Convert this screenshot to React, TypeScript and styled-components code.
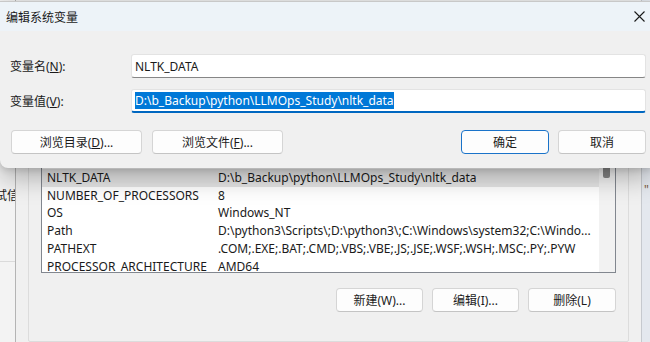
import React from 'react';
import styled, { createGlobalStyle } from 'styled-components';

const GlobalStyle = createGlobalStyle`
  html, body {
    margin: 0;
    padding: 0;
    overflow: hidden;
  }
  body {
    font-family: "Noto Sans", "Noto Sans CJK SC", sans-serif;
    font-size: 12px;
    color: #1a1a1a;
  }
`;

const Screen = styled.div`
  position: relative;
  width: 650px;
  height: 342px;
  overflow: hidden;
  background: #f0f0f0;
`;

const Desktop = styled.div`
  display: flex;
  height: 100%;
`;

const LeftStrip = styled.div`
  width: 15px;
  flex: none;
  display: flex;
  flex-direction: column;
  background: #f3f3f3;
  border-right: 1px solid #b4b4b4;
  box-shadow: 1px 0 2px rgba(0, 0, 0, 0.12);
  overflow: hidden;
`;

const StripText = styled.div`
  margin-top: 187px;
  margin-left: -5px;
  white-space: nowrap;
  line-height: 18px;
`;

const StripLine = styled.div`
  margin-top: 56px;
  border-top: 1px solid #dadada;
`;

const MainWindow = styled.div`
  flex: 1;
  display: flex;
  flex-direction: column;
  padding: 130px 12px 0 12px;
  background: #f0f0f0;
`;

const GroupBox = styled.div`
  height: 197px;
  display: flex;
  flex-direction: column;
  padding: 19px 12px 0 12px;
  border: 1px solid #dcdcdc;
  border-radius: 2px;
`;

const ListBox = styled.div`
  position: relative;
  height: 121px;
  border: 1px solid #82878f;
  background: #ffffff;
  overflow: hidden;
  padding-right: 16px;
`;

const ScrollTrack = styled.div`
  position: absolute;
  top: 0;
  right: 0;
  bottom: 0;
  width: 16px;
  background: #f2f2f2;
`;

const ScrollThumb = styled.div`
  position: absolute;
  top: 4px;
  left: 4px;
  width: 7px;
  height: 23px;
  border-radius: 2px;
  background: #858585;
`;

const Row = styled.div<{ $selected?: boolean }>`
  display: grid;
  grid-template-columns: 171px 1fr;
  height: 17.8px;
  line-height: 17.8px;
  background: ${(p) => (p.$selected ? '#e6e6e6' : 'transparent')};
  white-space: nowrap;
`;

const Cell = styled.div`
  padding-left: 5px;
  overflow: hidden;
`;

const ButtonRow = styled.div<{ $gap?: number }>`
  display: flex;
  gap: ${(p) => p.$gap ?? 9}px;
`;

const WinButtons = styled(ButtonRow)`
  justify-content: flex-end;
  margin-top: 15px;
`;

const Button = styled.div<{ $width: number; $primary?: boolean }>`
  width: ${(p) => p.$width}px;
  height: 24px;
  box-sizing: border-box;
  display: flex;
  align-items: center;
  justify-content: center;
  background: #fdfdfd;
  border: 1px solid ${(p) => (p.$primary ? '#1a73c9' : '#d5d5d5')};
  border-bottom-color: ${(p) => (p.$primary ? '#1a73c9' : '#c4c4c4')};
  border-radius: 4px;
  font-size: 12px;
  color: #1b1b1b;
`;

const RightStrip = styled.div`
  width: 8px;
  flex: none;
  background: #e4e8ee;
  border-left: 1px solid #c6c9ce;
  overflow: hidden;
`;

const Quote = styled.div`
  margin-top: 181px;
  margin-left: 2px;
  color: #7a5a3a;
  font-size: 12px;
`;

/* the edit dialog sits over the environment window */
const Dialog = styled.div`
  position: absolute;
  top: 1px;
  left: 0;
  width: 652px;
  height: 166px;
  display: flex;
  flex-direction: column;
  background: #f0f0f0;
  border-top: 1px solid #c8c8c8;
  border-bottom-left-radius: 8px;
  box-shadow: 0 10px 26px rgba(0, 0, 0, 0.28), 0 2px 6px rgba(0, 0, 0, 0.12);
`;

const TitleBar = styled.div`
  height: 29px;
  flex: none;
  display: flex;
  align-items: center;
  justify-content: space-between;
  padding: 0 7px 0 6px;
  background: #edf3f8;
`;

const Title = styled.div`
  font-size: 12px;
  color: #1a1a1a;
`;

const DialogBody = styled.div`
  display: flex;
  flex-direction: column;
  padding: 23px 6px 0 10px;
`;

const Field = styled.div`
  display: grid;
  grid-template-columns: 121px 1fr;
  align-items: center;
  margin-bottom: 11px;
`;

const Label = styled.div`
  font-size: 12px;
`;

const Input = styled.div<{ $focused?: boolean }>`
  height: 24px;
  box-sizing: border-box;
  display: flex;
  align-items: center;
  padding-left: 3px;
  background: #ffffff;
  border: 1px solid #e3e3e3;
  border-bottom: ${(p) => (p.$focused ? '2px solid #0067c0' : '1px solid #868686')};
  border-radius: 3px;
  font-size: 12px;
  white-space: nowrap;
`;

const Selection = styled.span`
  background: #0078d7;
  color: #ffffff;
  line-height: 17px;
`;

const DialogButtons = styled.div`
  display: flex;
  justify-content: space-between;
  margin-top: 6px;
  padding-left: 1px;
`;

const rows: [string, string][] = [
  ['MOZ_PLUGIN_PATH', 'C:\\Program Files\\plugins'],
  ['NLTK_DATA', 'D:\\b_Backup\\python\\LLMOps_Study\\nltk_data'],
  ['NUMBER_OF_PROCESSORS', '8'],
  ['OS', 'Windows_NT'],
  ['Path', 'D:\\python3\\Scripts\\;D:\\python3\\;C:\\Windows\\system32;C:\\Windo...'],
  ['PATHEXT', '.COM;.EXE;.BAT;.CMD;.VBS;.VBE;.JS;.JSE;.WSF;.WSH;.MSC;.PY;.PYW'],
  ['PROCESSOR_ARCHITECTURE', 'AMD64'],
];

const CloseIcon = () => (
  <svg width="11" height="11" viewBox="0 0 11 11">
    <path d="M0.5 0.5 L10.5 10.5 M10.5 0.5 L0.5 10.5" stroke="#1a1a1a" strokeWidth="1.1" fill="none" />
  </svg>
);

export default function App() {
  return (
    <Screen>
      <GlobalStyle />
      <Desktop>
        <LeftStrip>
          <StripText>试信</StripText>
          <StripLine />
        </LeftStrip>
        <MainWindow>
          <GroupBox>
            <ListBox>
              {rows.map(([name, value]) => (
                <Row key={name} $selected={name === 'NLTK_DATA'}>
                  <Cell>{name}</Cell>
                  <Cell>{value}</Cell>
                </Row>
              ))}
              <ScrollTrack>
                <ScrollThumb />
              </ScrollTrack>
            </ListBox>
            <WinButtons>
              <Button $width={87}>新建(W)...</Button>
              <Button $width={87}>编辑(I)...</Button>
              <Button $width={88}>删除(L)</Button>
            </WinButtons>
          </GroupBox>
        </MainWindow>
        <RightStrip>
          <Quote>"</Quote>
        </RightStrip>
      </Desktop>

      <Dialog>
        <TitleBar>
          <Title>编辑系统变量</Title>
          <CloseIcon />
        </TitleBar>
        <DialogBody>
          <Field>
            <Label>变量名(<u>N</u>):</Label>
            <Input>NLTK_DATA</Input>
          </Field>
          <Field>
            <Label>变量值(<u>V</u>):</Label>
            <Input $focused>
              <Selection>D:\b_Backup\python\LLMOps_Study\nltk_data</Selection>
            </Input>
          </Field>
          <DialogButtons>
            <ButtonRow $gap={10}>
              <Button $width={131}>浏览目录(<u>D</u>)...</Button>
              <Button $width={131}>浏览文件(<u>F</u>)...</Button>
            </ButtonRow>
            <ButtonRow>
              <Button $width={88} $primary>确定</Button>
              <Button $width={88}>取消</Button>
            </ButtonRow>
          </DialogButtons>
        </DialogBody>
      </Dialog>
    </Screen>
  );
}
